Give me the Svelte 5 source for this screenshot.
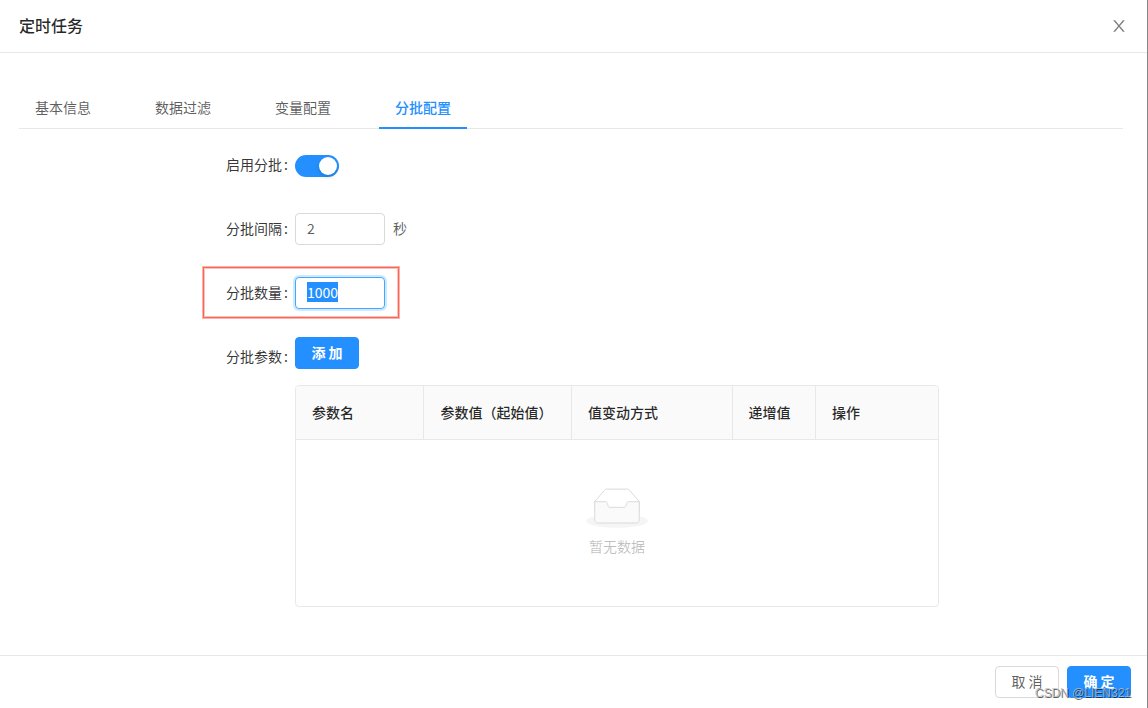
<script>
  import { onMount } from 'svelte';

  const tabs = ['基本信息', '数据过滤', '变量配置', '分批配置'];
  const columns = [
    { title: '参数名', width: 20 },
    { title: '参数值（起始值）', width: 23 },
    { title: '值变动方式', width: 25 },
    { title: '递增值', width: 13 },
    { title: '操作', width: 19 },
  ];

  let activeTab = '分批配置';
  let enabled = true;
  let interval = '2';
  let count = '1000';
  let countInput;

  onMount(() => {
    countInput.focus();
    countInput.select();
  });
</script>

<div class="drawer">
  <header class="drawer__header">
    <h1 class="drawer__title">定时任务</h1>
    <button class="drawer__close" type="button" aria-label="关闭">
      <svg viewBox="64 64 896 896" width="16" height="16" fill="currentColor" aria-hidden="true">
        <path d="M563.8 512l262.5-312.9c4.4-5.2.7-13.1-6.1-13.1h-79.8c-4.7 0-9.2 2.1-12.3 5.7L511.6 449.8 295.1 191.7c-3-3.6-7.5-5.7-12.3-5.7H203c-6.8 0-10.5 7.9-6.1 13.1L459.4 512 196.9 824.9A7.95 7.95 0 0 0 203 838h79.8c4.7 0 9.2-2.1 12.3-5.7l216.5-258.1 216.5 258.1c3 3.6 7.5 5.7 12.3 5.7h79.8c6.8 0 10.5-7.9 6.1-13.1L563.8 512z" />
      </svg>
    </button>
  </header>

  <main class="drawer__body">
    <div class="tabs" role="tablist">
      {#each tabs as tab}
        <button
          class="tab"
          class:tab--active={tab === activeTab}
          type="button"
          role="tab"
          aria-selected={tab === activeTab}
          on:click={() => (activeTab = tab)}
        >{tab}</button>
      {/each}
    </div>

    <form class="form" on:submit|preventDefault>
      <div class="row">
        <label class="row__label" for="enabled">启用分批</label>
        <div class="row__control">
          <input id="enabled" class="switch" type="checkbox" role="switch" bind:checked={enabled} />
        </div>
      </div>

      <div class="row">
        <label class="row__label" for="interval">分批间隔</label>
        <div class="row__control">
          <input id="interval" class="input" type="text" bind:value={interval} />
          <span class="unit">秒</span>
        </div>
      </div>

      <div class="row row--marked">
        <label class="row__label" for="count">分批数量</label>
        <div class="row__control">
          <input id="count" class="input" type="text" bind:value={count} bind:this={countInput} />
        </div>
      </div>

      <div class="row">
        <span class="row__label">分批参数</span>
        <div class="row__params">
          <button class="btn btn--primary" type="button">添 加</button>
          <table class="table">
            <colgroup>
              {#each columns as column}
                <col style="width: {column.width}%" />
              {/each}
            </colgroup>
            <thead>
              <tr>
                {#each columns as column}
                  <th>{column.title}</th>
                {/each}
              </tr>
            </thead>
            <tbody>
              <tr>
                <td colspan={columns.length}>
                  <div class="empty">
                    <svg width="62" height="40" viewBox="0 0 64 41" aria-hidden="true">
                      <g transform="translate(0 1)" fill="none" fill-rule="evenodd">
                        <ellipse fill="#f5f5f5" cx="32" cy="33" rx="32" ry="7" />
                        <g fill-rule="nonzero" stroke="#d9d9d9">
                          <path d="M55 12.76L44.854 1.258C44.367.474 43.656 0 42.907 0H21.093c-.749 0-1.46.474-1.947 1.257L9 12.761V22h46v-9.24z" />
                          <path d="M41.613 15.931c0-1.605.994-2.93 2.227-2.931H55v18.137C55 33.26 53.68 35 52.05 35h-40.1C10.32 35 9 33.259 9 31.137V13h11.16c1.233 0 2.227 1.323 2.227 2.928v.022c0 1.605 1.005 2.901 2.237 2.901h14.752c1.232 0 2.237-1.308 2.237-2.913v-.007z" fill="#fafafa" />
                        </g>
                      </g>
                    </svg>
                    <p class="empty__text">暂无数据</p>
                  </div>
                </td>
              </tr>
            </tbody>
          </table>
        </div>
      </div>
    </form>
  </main>

  <footer class="drawer__footer">
    <button class="btn" type="button">取 消</button>
    <button class="btn btn--primary" type="button">确 定</button>
    <span class="watermark">CSDN @LIEN321</span>
  </footer>
</div>

<style>
  :global(body) {
    margin: 0;
    background: #fff;
  }

  .drawer {
    display: flex;
    flex-direction: column;
    box-sizing: border-box;
    min-height: 100vh;
    border-right: 1px solid #858585;
    background: #fff;
    color: rgba(0, 0, 0, 0.65);
    font-family: "Noto Sans CJK SC", sans-serif;
    font-size: 14px;
    line-height: 22px;
  }

  .drawer button,
  .drawer input {
    box-sizing: border-box;
    margin: 0;
    font: inherit;
    color: inherit;
  }

  .drawer__header {
    display: flex;
    align-items: center;
    justify-content: space-between;
    height: 52px;
    padding: 0 20px 0 19px;
    border-bottom: 1px solid #e8e8e8;
  }

  .drawer__title {
    margin: 0;
    padding-bottom: 2px;
    color: rgba(0, 0, 0, 0.85);
    font-size: 16px;
    font-weight: 500;
  }

  .drawer .drawer__close {
    display: flex;
    padding: 0;
    border: 0;
    background: none;
    color: rgba(0, 0, 0, 0.5);
    cursor: pointer;
  }

  .drawer__body {
    flex: 1;
    padding: 32px 24px 48px 19px;
  }

  .tabs {
    display: flex;
    gap: 32px;
    border-bottom: 1px solid #e8e8e8;
  }

  .drawer .tab {
    height: 44px;
    margin-bottom: -1px;
    padding: 2px 16px 0;
    border: 0;
    border-bottom: 2px solid transparent;
    background: none;
    cursor: pointer;
  }

  .drawer .tab--active {
    border-bottom-color: #2490ff;
    color: #2490ff;
    font-weight: 500;
  }

  .form {
    display: flex;
    flex-direction: column;
    gap: 24px;
    padding-top: 16px;
  }

  .row {
    position: relative;
    display: grid;
    grid-template-columns: 6fr 14fr 4fr;
  }

  .row__label {
    padding-right: 7px;
    color: rgba(0, 0, 0, 0.8);
    line-height: 38px;
    text-align: right;
  }

  .row__label::after {
    content: ":";
    margin-left: 2px;
  }

  .row__control {
    display: flex;
    align-items: center;
    gap: 8px;
    height: 40px;
  }

  .row__params {
    display: flex;
    flex-direction: column;
    align-items: flex-start;
    gap: 16px;
  }

  /* red frame drawn over the row */
  .row--marked::after {
    content: "";
    position: absolute;
    top: -6px;
    left: calc(25% - 92px);
    box-sizing: border-box;
    width: 196px;
    height: 51px;
    border: 1px solid #fa6556;
    box-shadow: 0 0 0 1px rgba(250, 101, 86, 0.5), inset 0 0 0 1px rgba(250, 101, 86, 0.4);
    pointer-events: none;
  }

  .switch {
    appearance: none;
    width: 44px;
    height: 22px;
    padding: 2px;
    border-radius: 11px;
    background: rgba(0, 0, 0, 0.25);
    cursor: pointer;
  }

  .drawer .switch {
    margin-top: 2px;
  }

  .switch::before {
    content: "";
    display: block;
    width: 18px;
    height: 18px;
    border-radius: 50%;
    background: #fff;
    box-shadow: 0 2px 4px rgba(0, 35, 11, 0.2);
  }

  .switch:checked {
    background: #2490ff;
  }

  .switch:checked::before {
    margin-left: 22px;
  }

  .unit {
    padding-bottom: 2px;
  }

  .input {
    width: 90px;
    height: 32px;
    padding: 3px 11px 5px;
    border: 1px solid #d9d9d9;
    border-radius: 4px;
    background: #fff;
    outline: 0;
  }

  .input:focus {
    border-color: #40a9ff;
    box-shadow: 0 0 0 2px rgba(24, 144, 255, 0.2);
  }

  .input::selection {
    background: #2490ff;
    color: #fff;
  }

  .btn {
    min-width: 64px;
    height: 32px;
    padding: 0 15px 2px;
    border: 1px solid #d9d9d9;
    border-radius: 4px;
    background: #fff;
    cursor: pointer;
  }

  .drawer .btn--primary {
    border-color: #2490ff;
    background: #2490ff;
    color: #fff;
    font-weight: 700;
  }

  .table {
    width: 100%;
    table-layout: fixed;
    border: 1px solid #e8e8e8;
    border-radius: 4px;
    border-spacing: 0;
    overflow: hidden;
  }

  .table th {
    padding: 15px 0 16px 16px;
    border-right: 1px solid #e8e8e8;
    border-bottom: 1px solid #e8e8e8;
    background: #fafafa;
    color: rgba(0, 0, 0, 0.85);
    font-weight: 500;
    text-align: left;
    white-space: nowrap;
  }

  .table th:last-child {
    border-right: 0;
  }

  .table td {
    padding: 0;
  }

  .empty {
    display: flex;
    flex-direction: column;
    align-items: center;
    gap: 7px;
    padding: 48px 0 49px;
    color: rgba(0, 0, 0, 0.25);
  }

  .empty__text {
    margin: 0;
  }

  .drawer__footer {
    position: relative;
    display: flex;
    justify-content: flex-end;
    gap: 8px;
    padding: 10px 16px;
    border-top: 1px solid #e8e8e8;
  }

  .watermark {
    position: absolute;
    right: 16px;
    bottom: 4px;
    color: rgba(190, 190, 190, 0.8);
    font-family: "Liberation Sans", sans-serif;
    font-size: 12px;
    text-shadow: 1px 1px 0 rgba(0, 0, 0, 0.6);
    pointer-events: none;
  }
</style>
